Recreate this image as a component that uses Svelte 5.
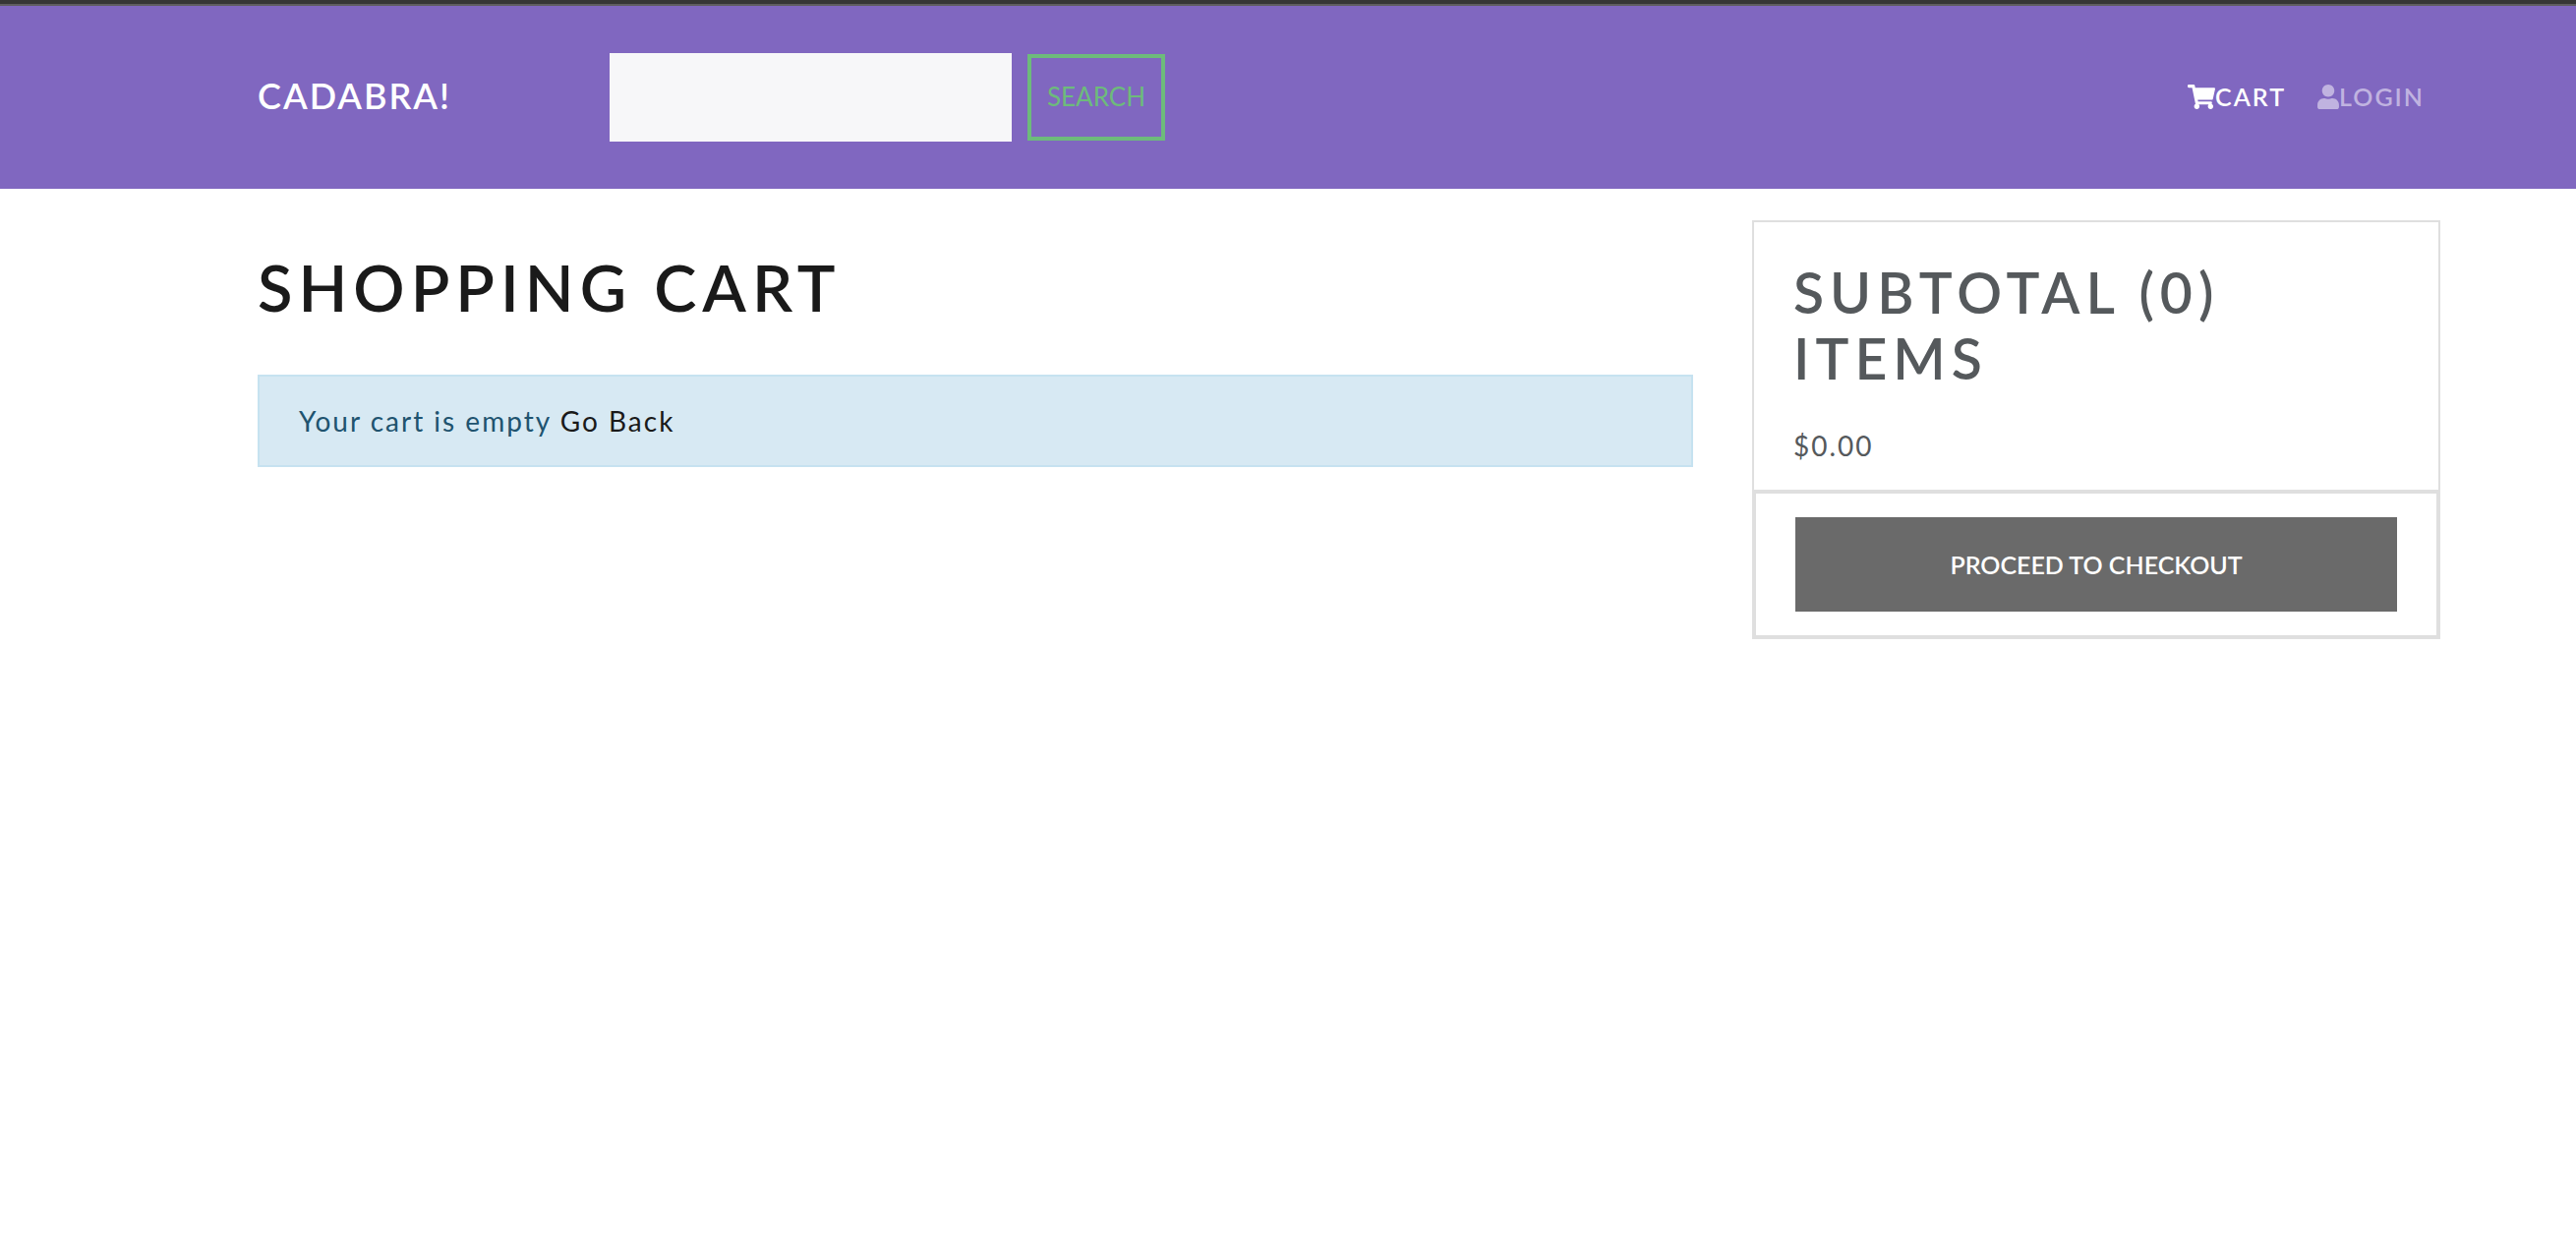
<script>
  let query = $state('');
  const itemCount = 0;
  const total = 0;
</script>

<div class="strip"></div>
<header class="navbar">
  <a class="brand" href="/">CADABRA!</a>
  <form class="search" onsubmit={(e) => e.preventDefault()}>
    <input type="text" aria-label="Search products" bind:value={query} />
    <button type="submit">SEARCH</button>
  </form>
  <nav>
    <a class="active" href="/cart">
      <svg class="cart-icon" viewBox="0 0 576 512" aria-hidden="true"><path d="M528.12 301.319l47.273-208C578.806 78.301 567.391 64 551.99 64H159.208l-9.166-44.81C147.758 8.021 137.93 0 126.529 0H24C10.745 0 0 10.745 0 24v16c0 13.255 10.745 24 24 24h69.883l70.248 343.435C147.325 417.1 136 435.222 136 456c0 30.928 25.072 56 56 56s56-25.072 56-56c0-15.674-6.447-29.835-16.824-40h209.647C430.447 426.165 424 440.326 424 456c0 30.928 25.072 56 56 56s56-25.072 56-56c0-22.172-12.888-41.332-31.579-50.405l5.517-24.276c3.413-15.018-8.002-29.319-23.403-29.319H218.117l-6.545-32h293.145c11.206 0 20.92-7.754 23.403-18.681z" /></svg><span>CART</span>
    </a>
    <a href="/login">
      <svg class="user-icon" viewBox="0 0 448 512" aria-hidden="true"><path d="M224 256c70.7 0 128-57.3 128-128S294.7 0 224 0 96 57.3 96 128s57.3 128 128 128zm89.6 32h-16.7c-22.2 10.2-46.9 16-72.9 16s-50.6-5.8-72.9-16h-16.7C60.2 288 0 348.2 0 422.4V464c0 26.5 21.5 48 48 48h352c26.5 0 48-21.5 48-48v-41.6c0-74.2-60.2-134.4-134.4-134.4z" /></svg><span>LOGIN</span>
    </a>
  </nav>
</header>

<main>
  <section>
    <h1>SHOPPING CART</h1>
    <div class="alert" role="status">Your cart is empty <a href="/">Go Back</a></div>
  </section>
  <aside>
    <div class="summary">
      <h2>SUBTOTAL ({itemCount}) ITEMS</h2>
      <p>${total.toFixed(2)}</p>
    </div>
    <div class="checkout">
      <button type="button">PROCEED TO CHECKOUT</button>
    </div>
  </aside>
</main>

<style>
  :global(body) {
    margin: 0;
    background: #fff;
    color: #55595c;
    font-family: Lato, 'Open Sans', sans-serif;
    font-size: 28px;
    line-height: 42px;
  }

  * {
    box-sizing: border-box;
  }

  a {
    text-decoration: none;
  }

  button,
  input {
    font: inherit;
    border-radius: 0;
    margin: 0;
  }

  .strip {
    height: 6px;
    background: #363636;
    border-bottom: 2px solid #5f5d60;
  }

  .navbar {
    display: flex;
    align-items: center;
    height: 186px;
    padding: 0 138px 0 262px;
    background: #8067c0;
  }

  .brand {
    width: 358px;
    padding-bottom: 4px;
    color: #fff;
    font-size: 36px;
    font-weight: 600;
    letter-spacing: 2px;
  }

  .search {
    display: flex;
    align-items: center;
    gap: 16px;
  }

  .search input {
    width: 409px;
    height: 90px;
    padding: 24px;
    border: 0;
    background: #f7f7f9;
    color: #55595c;
  }

  .search button {
    height: 88px;
    padding: 0 16px 2px;
    border: 4px solid #6dbb7b;
    background: transparent;
    color: #6dbb7b;
    font-size: 26px;
  }

  nav {
    display: flex;
    gap: 32px;
    margin-left: auto;
    padding: 0 16px 2px 0;
  }

  nav a {
    display: flex;
    align-items: center;
    color: #c0b3e0;
    font-size: 25px;
    font-weight: 600;
    letter-spacing: 2px;
  }

  nav a.active {
    color: #fff;
  }

  nav svg {
    height: 25px;
    fill: currentColor;
  }

  .cart-icon {
    width: 28px;
  }

  .user-icon {
    width: 22px;
  }

  main {
    display: grid;
    grid-template-columns: 73fr 35fr;
    align-items: start;
    gap: 60px;
    padding: 32px 138px 32px 262px;
    letter-spacing: 2px;
  }

  h1,
  h2,
  p {
    margin: 0;
  }

  h1,
  h2 {
    font-weight: 600;
    letter-spacing: 6px;
  }

  h1 {
    padding: 30px 0 35px;
    margin-bottom: 16px;
    color: #1a1a1a;
    font-size: 65px;
    line-height: 76px;
  }

  .alert {
    padding: 24px 40px;
    border: 2px solid #c6e2f0;
    background: #d7e9f3;
    color: #20536f;
  }

  .alert a {
    color: #1a1a1a;
  }

  .summary {
    padding: 38px 40px 24px;
    border: 2px solid #dfdfdf;
    border-bottom: 0;
  }

  h2 {
    margin-bottom: 34px;
    font-size: 57px;
    line-height: 67px;
  }

  .checkout {
    padding: 24px 40px;
    border: 4px solid #dfdfdf;
  }

  .checkout button {
    display: block;
    width: 100%;
    height: 96px;
    border: 0;
    background: #6a6a6a;
    color: #fff;
    font-size: 25px;
    font-weight: 600;
  }
</style>
